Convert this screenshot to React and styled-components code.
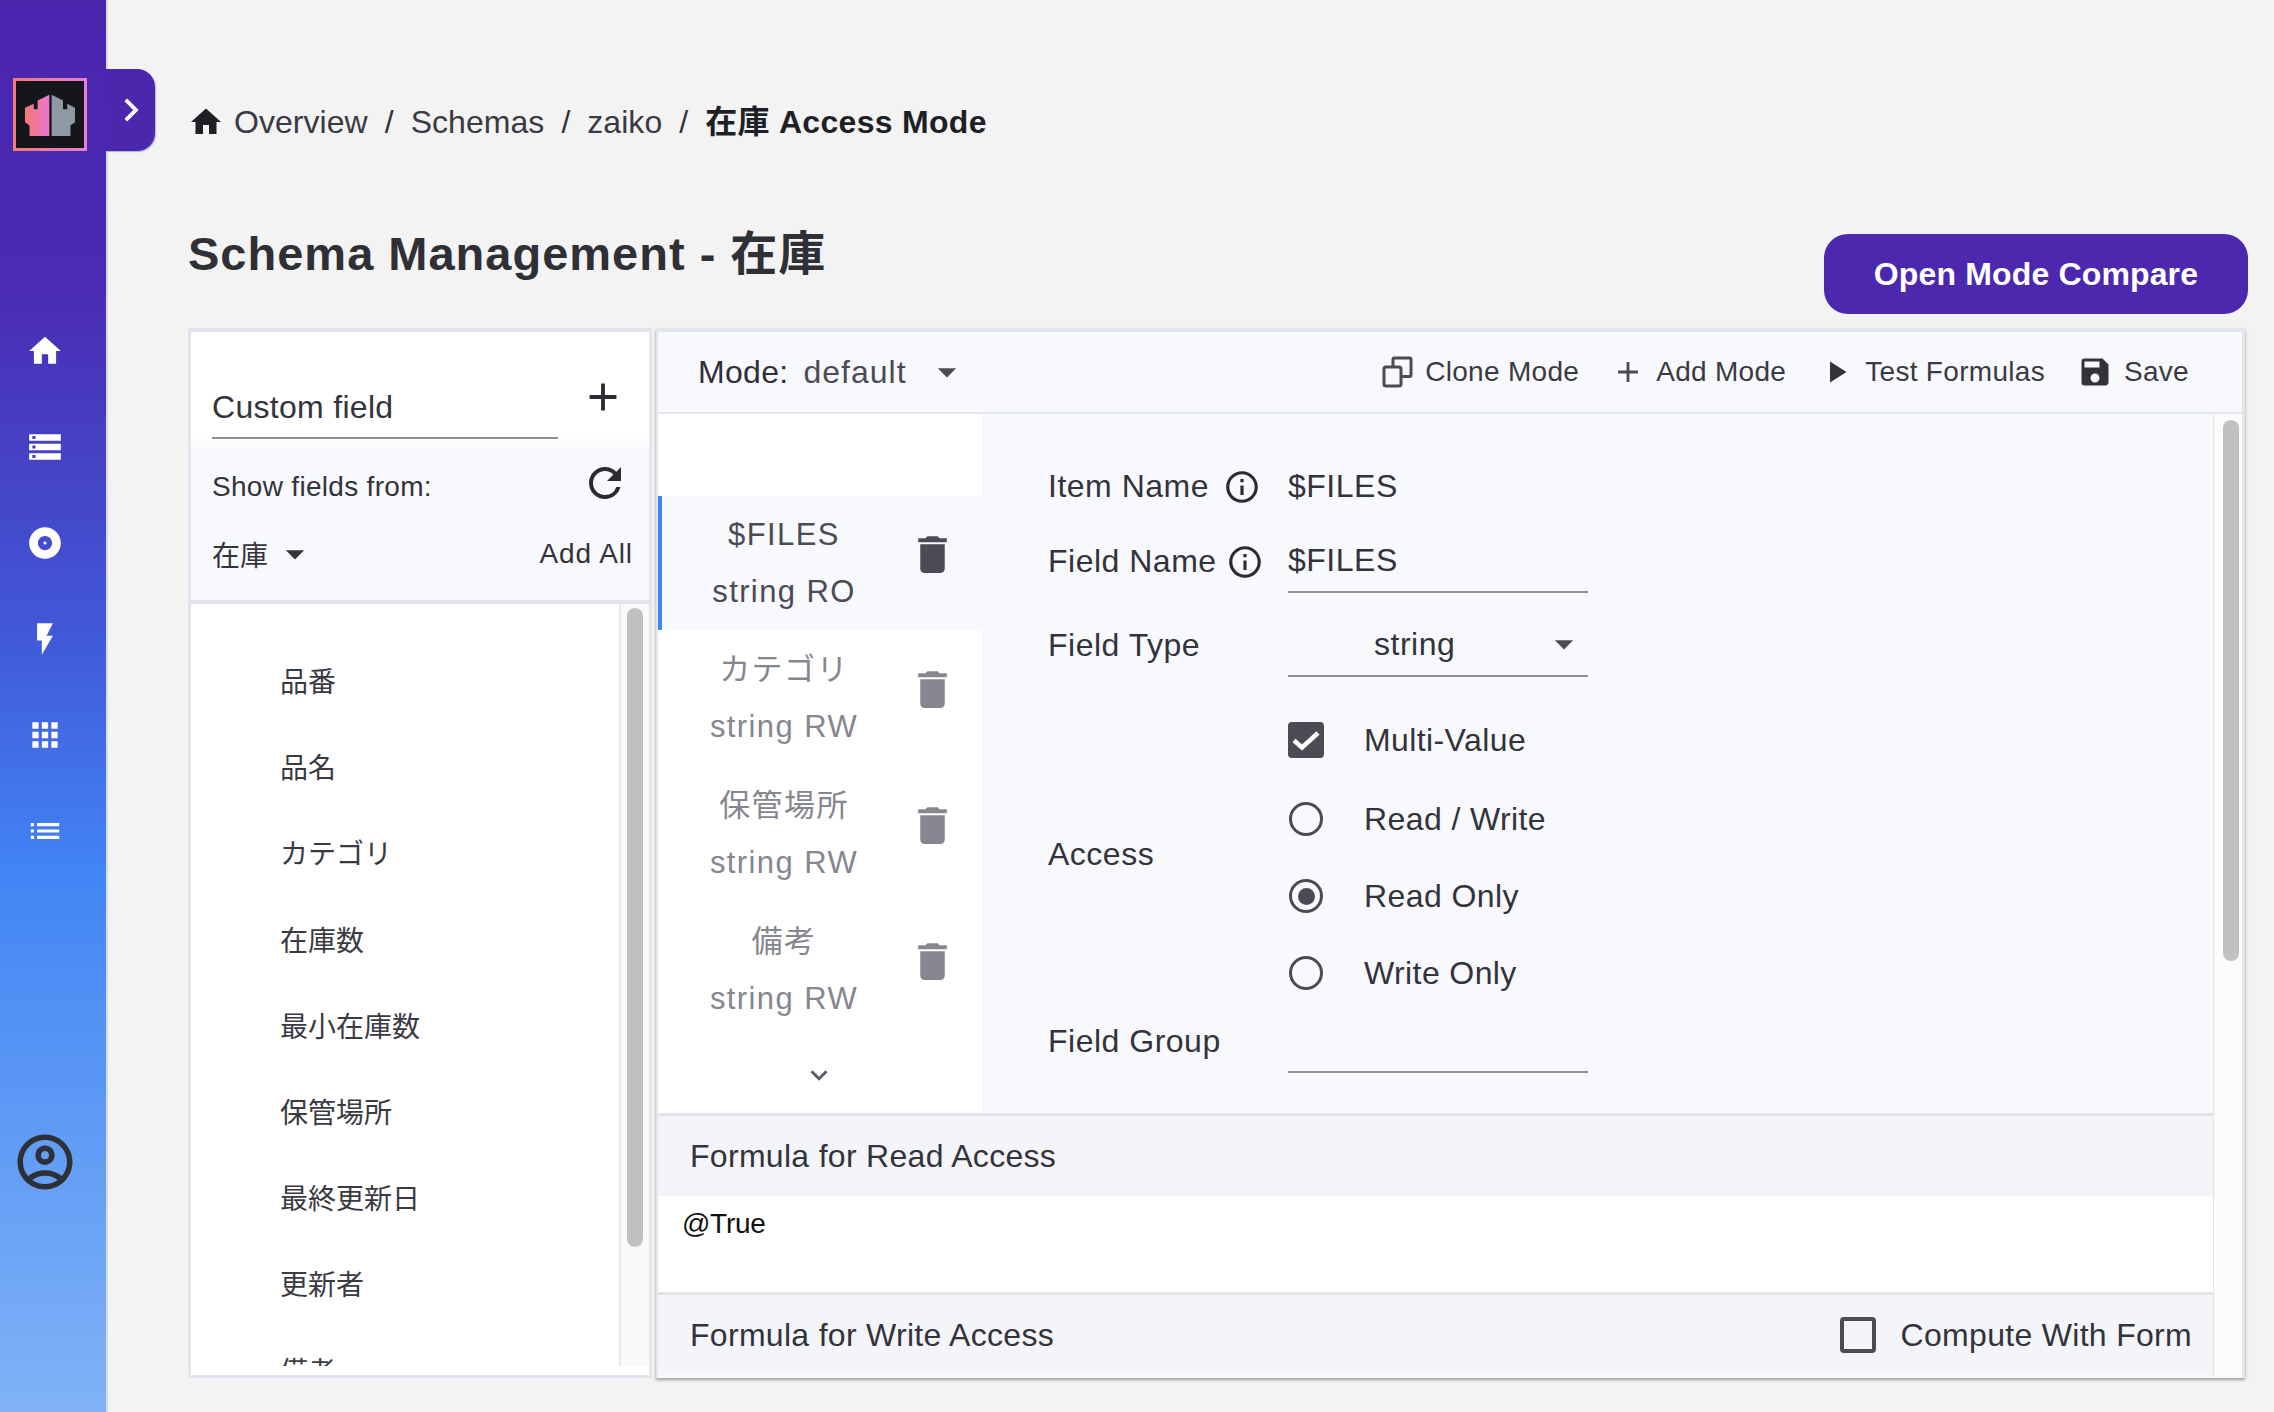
import React from "react"
import styled, { createGlobalStyle } from "styled-components"
import {
  MdHome, MdStorage, MdAlbum, MdFlashOn, MdApps, MdList, MdOutlineAccountCircle,
  MdChevronRight, MdAdd, MdRefresh, MdArrowDropDown, MdDelete, MdInfoOutline,
  MdPlayArrow, MdSave, MdKeyboardArrowDown,
} from "react-icons/md"

const fontStack = `"Liberation Sans", "Noto Sans CJK JP", Arial, sans-serif`

const GlobalStyle = createGlobalStyle`
  html, body {
    margin: 0;
    height: 100%;
    overflow: hidden;
    background: #f3f3f4;
    font-family: ${fontStack};
    color: #33333b;
  }
  * { box-sizing: border-box; }
`

const fields = ["品番", "品名", "カテゴリ", "在庫数", "最小在庫数", "保管場所", "最終更新日", "更新者", "備考"]

const modeFields = [
  { name: "$FILES", type: "string RO", active: true },
  { name: "カテゴリ", type: "string RW" },
  { name: "保管場所", type: "string RW" },
  { name: "備考", type: "string RW" },
]

const App = () => (
  <Page>
    <GlobalStyle />
    <Sidebar>
      <Logo>
        <svg width="68" height="66" viewBox="46 91 208 203">
          <defs>
            <linearGradient id="fort" x1="0" x2="1" y1="0" y2="0">
              <stop offset="0" stopColor="#f47b72" />
              <stop offset="1" stopColor="#e975d0" />
            </linearGradient>
          </defs>
          <polygon fill="url(#fort)" points="73,170 100,158 100,175 112,175 112,148 148,130 148,257 87,257 87,225 73,215" />
          <polygon fill="#8e99a3" points="227,170 203,158 203,175 190,175 190,148 155,130 155,257 213,257 213,225 227,215" />
        </svg>
      </Logo>
      <Nav>
        <NavItem><MdHome size={38} /></NavItem>
        <NavItem><MdStorage size={38} /></NavItem>
        <NavItem><MdAlbum size={38} /></NavItem>
        <NavItem><MdFlashOn size={38} /></NavItem>
        <NavItem><MdApps size={38} /></NavItem>
        <NavItem><MdList size={38} /></NavItem>
      </Nav>
      <UserIcon><MdOutlineAccountCircle size={76} /></UserIcon>
      <CollapseTab><MdChevronRight size={46} /></CollapseTab>
    </Sidebar>

    <Main>
      <Breadcrumb>
        <MdHome size={36} />
        <Crumb>Overview</Crumb>
        <Slash>/</Slash>
        <Crumb>Schemas</Crumb>
        <Slash>/</Slash>
        <Crumb>zaiko</Crumb>
        <Slash>/</Slash>
        <Crumb $current>在庫 Access Mode</Crumb>
      </Breadcrumb>

      <HeaderRow>
        <Title>Schema Management - 在庫</Title>
        <CompareButton>Open Mode Compare</CompareButton>
      </HeaderRow>

      <Panels>
        <LeftPanel>
          <FieldTools>
            <CustomRow>
              <CustomInput>Custom field</CustomInput>
              <AddIcon><MdAdd size={46} /></AddIcon>
            </CustomRow>
            <ShowRow>
              <span>Show fields from:</span>
              <RefreshIcon><MdRefresh size={48} /></RefreshIcon>
            </ShowRow>
            <SourceRow>
              <SourceSelect>在庫<MdArrowDropDown size={44} /></SourceSelect>
              <AddAll>Add All</AddAll>
            </SourceRow>
          </FieldTools>
          <FieldListWrap>
            <FieldList>
              {fields.map(f => <FieldItem key={f}>{f}</FieldItem>)}
            </FieldList>
            <ListTrack><ListThumb /></ListTrack>
          </FieldListWrap>
        </LeftPanel>

        <RightPanel>
          <Toolbar>
            <ModeLabel>Mode:</ModeLabel>
            <ModeValue>default</ModeValue>
            <MdArrowDropDown size={44} color="#4b4b55" />
            <ToolGroup>
              <ToolButton>
                <svg width="32" height="32" viewBox="0 0 32 32" fill="none" stroke="#4b4b55" strokeWidth="3">
                  <rect x="2" y="11" width="17" height="19" rx="2" />
                  <path d="M11 11V3.5a1.5 1.5 0 0 1 1.5-1.5h15a1.5 1.5 0 0 1 1.5 1.5V19a1.5 1.5 0 0 1-1.5 1.5H19" />
                </svg>
                Clone Mode
              </ToolButton>
              <ToolButton><MdAdd size={34} color="#4b4b55" />Add Mode</ToolButton>
              <ToolButton><MdPlayArrow size={36} color="#33333b" />Test Formulas</ToolButton>
              <ToolButton><MdSave size={36} color="#33333b" />Save</ToolButton>
            </ToolGroup>
          </Toolbar>

          <RightBody>
            <Content>
              <TopRow>
                <ModeList>
                  {modeFields.map(f => (
                    <ModeItem key={f.name} $active={f.active}>
                      <ModeText>
                        <div>{f.name}</div>
                        <div>{f.type}</div>
                      </ModeText>
                      <MdDelete size={49} />
                    </ModeItem>
                  ))}
                  <MoreArrow><MdKeyboardArrowDown size={34} /></MoreArrow>
                </ModeList>

                <Form>
                  <FormRow $height={52} $top={46}>
                    <Label $short $gap={14}>Item Name<MdInfoOutline size={38} /></Label>
                    <PlainValue>$FILES</PlainValue>
                  </FormRow>
                  <FormRow $height={81}>
                    <Label $gap={9}>Field Name<MdInfoOutline size={38} /></Label>
                    <LinedValue>$FILES</LinedValue>
                  </FormRow>
                  <FormRow $height={84}>
                    <Label>Field Type</Label>
                    <LinedValue $select>
                      <TypeName>string</TypeName>
                      <MdArrowDropDown size={44} color="#4b4b55" />
                    </LinedValue>
                  </FormRow>
                  <AccessRow>
                    <AccessLabel>Access</AccessLabel>
                    <Options>
                      <Option $first>
                        <CheckedBox>
                          <svg width="36" height="36" viewBox="0 0 36 36" fill="none" stroke="#fff" strokeWidth="4.5">
                            <path d="M6 18.5l8 7 16-14.5" />
                          </svg>
                        </CheckedBox>
                        Multi-Value
                      </Option>
                      <Option><Radio />Read / Write</Option>
                      <Option><Radio $on />Read Only</Option>
                      <Option><Radio />Write Only</Option>
                    </Options>
                  </AccessRow>
                  <FormRow $height={68}>
                    <Label>Field Group</Label>
                    <LinedValue />
                  </FormRow>
                </Form>
              </TopRow>

              <SectionHead>Formula for Read Access</SectionHead>
              <Editor>@True</Editor>
              <SectionHead>
                Formula for Write Access
                <ComputeToggle><EmptyBox />Compute With Form</ComputeToggle>
              </SectionHead>
            </Content>
            <Gutter><GutterThumb /></Gutter>
          </RightBody>
        </RightPanel>
      </Panels>
    </Main>
  </Page>
)

export default App

const Page = styled.div`
  display: flex;
  width: 2274px;
  height: 1412px;
`

const Sidebar = styled.aside`
  position: relative;
  flex: 0 0 108px;
  height: 100%;
  padding-top: 78px;
  padding-left: 13px;
  border-right: 2px solid #d9d9de;
  background: linear-gradient(180deg, #4a26ad 0%, #4a2bb3 20%, #4159d8 45%, #4285f4 62%, #80b3f6 100%);
`

const Logo = styled.div`
  display: flex;
  align-items: center;
  justify-content: center;
  width: 74px;
  height: 73px;
  background: #14161c;
  border: 3px solid transparent;
  border-image: linear-gradient(90deg, #f27a76, #e87cd8) 1;
`

const CollapseTab = styled.div`
  position: absolute;
  top: 69px;
  left: 106px;
  display: flex;
  align-items: center;
  justify-content: center;
  width: 49px;
  height: 82px;
  color: #fff;
  background: #4b27ae;
  border-radius: 0 18px 18px 0;
  box-shadow: 1px 1px 1px rgba(120, 110, 190, 0.5);
`

const Nav = styled.nav`
  margin-top: 152px;
  margin-left: -13px;
  width: 90px;
`

const NavItem = styled.div`
  display: flex;
  align-items: center;
  justify-content: center;
  height: 96px;
  color: #fff;
`

const UserIcon = styled.div`
  display: flex;
  justify-content: center;
  width: 66px;
  margin-top: 245px;
  margin-left: -1px;
  color: #2f2f38;
`

const Main = styled.main`
  flex: 1;
  min-width: 0;
  padding: 102px 26px 0 80px;
`

const Breadcrumb = styled.div`
  display: flex;
  align-items: baseline;
  height: 40px;
  margin-bottom: 82px;
  font-size: 32px;
  line-height: 40px;
  color: #33333b;

  svg { align-self: center; margin-left: 0; margin-right: 10px; color: #1f1f26; }
`

const Crumb = styled.span`
  font-weight: ${props => (props.$current ? "700" : "400")};
  letter-spacing: ${props => (props.$current ? "0.3px" : "0.05px")};
  color: ${props => (props.$current ? "#1f1f26" : "#3a3a42")};
`

const Slash = styled.span`
  margin: 0 17px;
`

const HeaderRow = styled.div`
  display: flex;
  justify-content: space-between;
  align-items: flex-start;
  height: 90px;
  margin-bottom: 14px;
`

const Title = styled.h1`
  margin: 0;
  font-size: 47px;
  line-height: 60px;
  font-weight: 700;
  letter-spacing: 1px;
  color: #2f2f36;
`

const CompareButton = styled.button`
  width: 424px;
  height: 80px;
  margin-top: 10px;
  border: 0;
  border-radius: 24px;
  background: #4b28ae;
  color: #fff;
  font-family: inherit;
  font-size: 32px;
  font-weight: 700;
  letter-spacing: 0.15px;
`

const Panels = styled.div`
  display: flex;
  gap: 4px;
  height: 1050px;
  padding-right: 3px;
`

const LeftPanel = styled.section`
  display: flex;
  flex-direction: column;
  flex: 0 0 464px;
  border: 3px solid #e3e5ee;
  border-top-width: 4px;
  background: #fff;
`

const FieldTools = styled.div`
  flex: 0 0 272px;
  padding: 0 14px 0 21px;
  border-bottom: 4px solid #e3e5ee;
  background: linear-gradient(180deg, #fff 0%, #fff 38%, #f8f9fd 46%, #f8f9fd 100%);
  font-size: 28px;
`

const CustomRow = styled.div`
  display: flex;
  align-items: flex-end;
  height: 107px;
`

const CustomInput = styled.div`
  width: 346px;
  height: 64px;
  line-height: 64px;
  font-size: 32px;
  letter-spacing: 0.3px;
  border-bottom: 2px solid #8f8f8f;
`

const AddIcon = styled.div`
  display: flex;
  margin: 0 0 19px 22px;
  color: #2b2b33;
`

const ShowRow = styled.div`
  display: flex;
  align-items: center;
  justify-content: space-between;
  height: 48px;
  margin-top: 24px;
  letter-spacing: 0.3px;
`

const RefreshIcon = styled.div`
  display: flex;
  margin: -8px 6px 0 0;
  color: #2b2b33;
`

const SourceRow = styled.div`
  display: flex;
  align-items: center;
  justify-content: space-between;
  height: 48px;
  margin-top: 19px;
`

const SourceSelect = styled.div`
  display: flex;
  align-items: center;
  gap: 5px;
  color: #33333b;
`

const AddAll = styled.span`
  margin-right: 2px;
  letter-spacing: 0.9px;
`

const FieldListWrap = styled.div`
  display: flex;
  flex: 1;
  min-height: 0;
`

const FieldList = styled.div`
  flex: 0 0 430px;
  height: 762px;
  padding: 36px 0 0 89px;
  overflow: hidden;
  border-right: 2px solid #e8e8ea;
`

const FieldItem = styled.div`
  height: 86.2px;
  line-height: 86px;
  font-size: 28px;
  color: #3a3a42;
`

const ListTrack = styled.div`
  flex: 1;
  height: 762px;
  padding: 4px 5px 0 6px;
  background: #fafafa;
`

const ListThumb = styled.div`
  width: 16px;
  height: 639px;
  border-radius: 8px;
  background: #c1c1c1;
`

const RightPanel = styled.section`
  display: flex;
  flex-direction: column;
  flex: 1;
  min-width: 0;
  border-top: 4px solid #e3e5ee;
  border-left: 2px solid #e3e5ee;
  border-right: 3px solid #e3e5ee;
  box-shadow: 0 2px 3px rgba(0, 0, 0, 0.35);
  background: #fbfbfc;
`

const Toolbar = styled.div`
  display: flex;
  align-items: center;
  flex: 0 0 82px;
  padding: 0 53px 0 40px;
  background: #f8f9fd;
  border-bottom: 2px solid #e5e7ee;
  font-size: 32px;
`

const ModeLabel = styled.span`
  letter-spacing: 0.3px;
  color: #2f2f36;
`

const ModeValue = styled.span`
  margin: 0 18px 0 15px;
  letter-spacing: 1px;
  color: #4b4b55;
`

const ToolGroup = styled.div`
  display: flex;
  align-items: center;
  gap: 32px;
  margin-left: auto;
`

const ToolButton = styled.div`
  display: flex;
  align-items: center;
  gap: 11px;
  font-size: 28px;
  letter-spacing: 0.3px;
  color: #3a3a42;
`

const RightBody = styled.div`
  display: flex;
  flex: 1;
  min-height: 0;
`

const Content = styled.div`
  display: flex;
  flex-direction: column;
  flex: 0 0 1555px;
`

const TopRow = styled.div`
  display: flex;
  flex: 0 0 699px;
`

const ModeList = styled.div`
  flex: 0 0 323px;
  padding-top: 82px;
  background: #fff;
`

const ModeItem = styled.div`
  display: flex;
  align-items: center;
  height: ${props => (props.$active ? "134px" : "136px")};
  background: ${props => (props.$active ? "#f8f9fd" : "transparent")};
  box-shadow: ${props => (props.$active ? "inset 4px 0 0 #4285f4" : "none")};
  color: ${props => (props.$active ? "#4b4b55" : "#86868e")};

  svg { flex: none; margin: 0 0 18px -2px; }
`

const ModeText = styled.div`
  flex: 0 0 252px;
  font-size: 31px;
  line-height: 57px;
  letter-spacing: 1.4px;
  text-align: center;
`

const MoreArrow = styled.div`
  display: flex;
  justify-content: center;
  width: 322px;
  margin-top: 20px;
  color: #5a5a64;
`

const Form = styled.div`
  flex: 1;
  padding-left: 67px;
  background: #f8f9fd;
`

const FormRow = styled.div`
  display: flex;
  align-items: flex-end;
  height: ${props => props.$height + (props.$top || 0)}px;
  padding-top: ${props => props.$top || 0}px;
`

const Label = styled.div`
  display: flex;
  align-items: center;
  gap: ${props => props.$gap || 0}px;
  flex: 0 0 240px;
  height: ${props => (props.$short ? "52px" : "64px")};
  font-size: 32px;
  letter-spacing: 0.5px;
  color: #33333b;

  svg { flex: none; color: #2b2b33; margin-top: 2px; }
`

const PlainValue = styled.div`
  height: 52px;
  line-height: 52px;
  font-size: 32px;
  letter-spacing: 0.5px;
  color: #33333b;
`

const LinedValue = styled.div`
  display: flex;
  align-items: center;
  width: 300px;
  height: 64px;
  font-size: 32px;
  letter-spacing: 0.5px;
  border-bottom: 2px solid #8f8f94;
  justify-content: ${props => (props.$select ? "space-between" : "flex-start")};
  padding-right: ${props => (props.$select ? "2px" : "0")};
`

const TypeName = styled.span`
  margin-left: 86px;
`

const AccessRow = styled.div`
  display: flex;
  align-items: center;
`

const AccessLabel = styled.div`
  flex: 0 0 240px;
  margin-top: 27px;
  font-size: 32px;
  letter-spacing: 0.5px;
`

const Options = styled.div`
  display: flex;
  flex-direction: column;
  gap: 13px;
  padding: 31px 0 0;
`

const Option = styled.div`
  display: flex;
  align-items: center;
  height: 64px;
  margin-bottom: ${props => (props.$first ? "2px" : "0")};
  font-size: 32px;
  letter-spacing: 0.4px;
  color: #33333b;
`

const CheckedBox = styled.div`
  display: flex;
  align-items: center;
  justify-content: center;
  width: 36px;
  height: 36px;
  margin-right: 40px;
  border-radius: 4px;
  background: #4b4b55;
`

const Radio = styled.div`
  display: flex;
  align-items: center;
  justify-content: center;
  width: 34px;
  height: 34px;
  margin: 0 41px 0 1px;
  border: 3px solid #4b4b55;
  border-radius: 50%;

  &::after {
    content: "";
    display: ${props => (props.$on ? "block" : "none")};
    width: 17px;
    height: 17px;
    border-radius: 50%;
    background: #4b4b55;
  }
`

const SectionHead = styled.div`
  display: flex;
  align-items: center;
  justify-content: space-between;
  height: 83px;
  padding: 0 21px 0 32px;
  background: #f4f5f9;
  border-top: 3px solid #e3e3e6;
  font-size: 32px;
  letter-spacing: 0.3px;
  color: #33333b;
`

const Editor = styled.div`
  height: 96px;
  padding: 11px 0 0 24px;
  background: #fff;
  font-size: 28px;
  line-height: 34px;
  letter-spacing: -0.3px;
  color: #111;
`

const ComputeToggle = styled.div`
  display: flex;
  align-items: center;
  gap: 25px;
`

const EmptyBox = styled.div`
  width: 36px;
  height: 36px;
  border: 4px solid #4b4b55;
  border-radius: 4px;
`

const Gutter = styled.div`
  flex: 1;
  padding: 6px 0 0 9px;
  border-left: 1px solid #e4e4e8;
  background: #fbfbfc;
`

const GutterThumb = styled.div`
  width: 16px;
  height: 541px;
  border-radius: 8px;
  background: #c1c1c1;
`
